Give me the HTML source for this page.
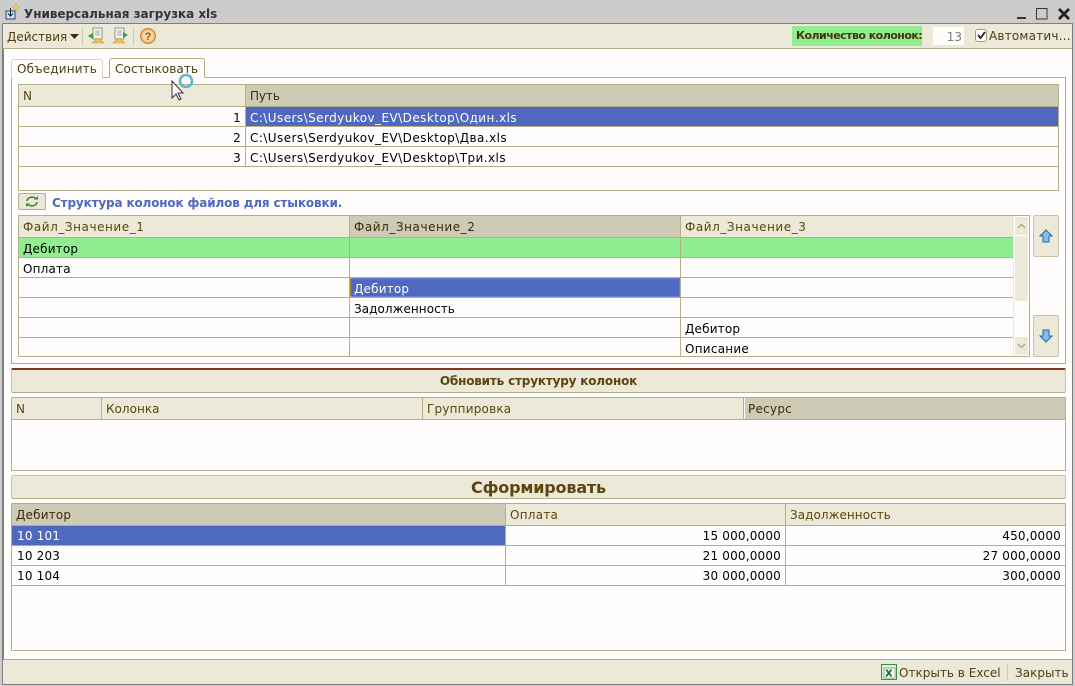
<!DOCTYPE html>
<html><head><meta charset="utf-8">
<style>
html,body{margin:0;padding:0;background:#fff}
body{width:1075px;height:686px;position:relative;overflow:hidden;font-family:"DejaVu Sans",sans-serif;font-size:12px;color:#000}
.r{position:absolute;box-sizing:border-box}
.t{position:absolute;white-space:nowrap;line-height:16px;height:16px;letter-spacing:.18px;font-size:12px}
.h{color:#5c4510}
.hs{color:#3f2a05}
.b{font-weight:bold}
.ra{text-align:right}
.p{letter-spacing:.44px}
.f{letter-spacing:.55px}
.z{letter-spacing:.05px}
</style></head><body>
<!-- window -->
<div class="r" style="left:0;top:0;width:1075px;height:686px;background:#ccc"></div>
<div class="r" style="left:2px;top:23px;width:1071px;height:662px;background:#fffefd;border:1px solid #7f7f7f;border-width:1px 1px 2px 2px"></div>
<svg class="r" style="left:4px;top:4px" width="18" height="18" viewBox="0 0 18 18"><path d="M2 7h9v8H2z" fill="#cfe0ef" stroke="#2a4a6a"/><path d="M6.500 4v8M4 9.500l2.500 2.500 2.500-2.500" stroke="#123" fill="none"/><path d="M12 1l2.500 2.500L12 6 9.500 3.500z" fill="#ffe25c" stroke="#d0a020" stroke-width=".7"/></svg>
<div class="t b" style="left:24px;top:6px;color:#33333f;font-size:12px;letter-spacing:-.04px">Универсальная загрузка xls</div>
<svg class="r" style="left:1014px;top:5px" width="58" height="16" viewBox="0 0 58 16"><rect x="3" y="12" width="9" height="2" fill="#333"/><rect x="22.500" y="3.500" width="10.500" height="10.500" fill="none" stroke="#333"/><path d="M45 4l10 10M55 4L45 14" stroke="#222" stroke-width="2.800"/></svg>
<!-- toolbar -->
<div class="r" style="left:3px;top:24px;width:1069px;height:25px;background:#ece9d8;border-bottom:1px solid #b4ae89"></div>
<div class="t" style="left:7px;top:29px;color:#4f3d14;letter-spacing:0">Действия</div>
<svg class="r" style="left:70px;top:33px" width="9" height="6"><path d="M0 1h9L4.500 6z" fill="#3a2a10"/></svg>
<div class="r" style="left:82px;top:27px;width:1px;height:19px;background:#cfcbb6"></div>
<svg class="r" style="left:87px;top:27px" width="20" height="18" viewBox="0 0 20 18"><path d="M6 1h9v11H6z" fill="#f6f6f0" stroke="#8a9a80"/><path d="M8 4h5M8 6h5M8 8h5" stroke="#9ab"/><path d="M1 9l5-3v6z" fill="#3b9a3b"/><path d="M5 16l6-5 6 5z" fill="#f0c060" stroke="#c8943a" stroke-width=".6"/></svg>
<svg class="r" style="left:112px;top:27px" width="20" height="18" viewBox="0 0 20 18"><path d="M3 1h9v11H3z" fill="#f6f6f0" stroke="#8a9a80"/><path d="M5 4h5M5 6h5M5 8h5" stroke="#9ab"/><path d="M16 8l-5-3v6z" fill="#3b9a3b"/><path d="M1 16l6-5 6 5z" fill="#f0c060" stroke="#c8943a" stroke-width=".6"/></svg>
<div class="r" style="left:133px;top:27px;width:1px;height:19px;background:#cfcbb6"></div>
<svg class="r" style="left:139px;top:27px" width="18" height="18" viewBox="0 0 18 18"><circle cx="9" cy="9" r="7.500" fill="#f3b766" stroke="#b9854a"/><circle cx="9" cy="9" r="5.500" fill="#fbd9a0"/><text x="9" y="13" font-size="11" font-weight="bold" text-anchor="middle" fill="#8a5a1a" font-family="Liberation Sans">?</text></svg>
<div class="r" style="left:792px;top:26px;width:130px;height:20px;background:#90ee90"></div>
<div class="t b" style="left:796px;top:28px;color:#4a3208;font-size:11px;letter-spacing:-.53px">Количество колонок:</div>
<div class="r" style="left:933px;top:27px;width:31px;height:18px;background:#fffefd"></div>
<div class="t ra" style="left:933px;top:29px;width:29px;color:#7d7d7d;letter-spacing:0">13</div>
<div class="r" style="left:975px;top:29px;width:12px;height:13px;background:#fff;border:1px solid #a39c77;border-radius:3px"></div>
<svg class="r" style="left:976px;top:30px" width="11" height="11"><path d="M2 5l2.500 3L9 2" stroke="#222" stroke-width="1.800" fill="none"/></svg>
<div class="t" style="left:989px;top:28px;color:#4f3d14;letter-spacing:.2px">Автоматич...</div>
<!-- tabs -->
<div class="r" style="left:11px;top:77px;width:1055px;height:287px;border:1px solid #b4ae89"></div>
<div class="r" style="left:11px;top:59px;width:92px;height:19px;border:1px solid #d8d4bf;border-bottom:none;border-radius:3px 3px 0 0;background:#fffefd"></div>
<div class="t" style="left:17px;top:61px;color:#4f3d14;letter-spacing:.15px">Объединить</div>
<div class="r" style="left:109px;top:58px;width:96px;height:20px;border:1px solid #b4ae89;border-bottom:1px solid #fffefd;border-radius:3px 3px 0 0;background:#fffefd"></div>
<div class="t" style="left:115px;top:61px;color:#4f3d14;letter-spacing:.12px">Состыковать</div>
<!-- grid 1 -->
<div class="r" style="left:18px;top:84px;width:1041px;height:107px;border:1px solid #b4ae89;background:#fffefd"></div>
<div class="r" style="left:19px;top:85px;width:226px;height:22px;background:#ece9d8"></div>
<div class="r" style="left:246px;top:85px;width:812px;height:22px;background:#cdcab5"></div>
<div class="r" style="left:19px;top:106px;width:1039px;height:1px;background:#b4ae89"></div>
<div class="r" style="left:245px;top:85px;width:1px;height:82px;background:#b4ae89"></div>
<div class="r" style="left:246px;top:107px;width:812px;height:19px;background:#5069c0"></div>
<div class="r" style="left:19px;top:126px;width:1039px;height:1px;background:#b4ae89"></div>
<div class="r" style="left:19px;top:146px;width:1039px;height:1px;background:#b4ae89"></div>
<div class="r" style="left:19px;top:166px;width:1039px;height:1px;background:#b4ae89"></div>
<div class="t h" style="left:23px;top:88px">N</div>
<div class="t hs" style="left:250px;top:88px;letter-spacing:-.1px">Путь</div>
<div class="t ra" style="left:19px;top:110px;width:222px">1</div>
<div class="t ra" style="left:19px;top:130px;width:222px">2</div>
<div class="t ra" style="left:19px;top:150px;width:222px">3</div>
<div class="t p" style="left:250px;top:110px;color:#fff">C:\Users\Serdyukov_EV\Desktop\Один.xls</div>
<div class="t p" style="left:250px;top:130px">C:\Users\Serdyukov_EV\Desktop\Два.xls</div>
<div class="t p" style="left:250px;top:150px">C:\Users\Serdyukov_EV\Desktop\Три.xls</div>
<!-- cursor -->
<svg class="r" style="left:170px;top:72px" width="26" height="30" viewBox="0 0 26 30"><circle cx="16" cy="9" r="6" fill="none" stroke="#5fb8c8" stroke-width="2.600"/><path d="M2 9v17l4-4 3 6 2-1-3-6h5z" fill="#fff" stroke="#333"/></svg>
<!-- refresh + title -->
<div class="r" style="left:18px;top:193px;width:28px;height:17px;background:#ece9d8;border:1px solid #b4ae89;border-radius:2px"></div>
<svg class="r" style="left:25px;top:195px" width="14" height="13" viewBox="0 0 14 13"><path d="M2 6a5 4.500 0 0 1 9-2M12 7a5 4.500 0 0 1-9 2" fill="none" stroke="#2f8a2f" stroke-width="1.500"/><path d="M9 4.500h4V1zM5 8.500H1V12z" fill="#2f8a2f"/></svg>
<div class="t b" style="left:52px;top:195px;color:#4f68c0;letter-spacing:-.15px">Структура колонок файлов для стыковки.</div>
<!-- grid 2 -->
<div class="r" style="left:18px;top:215px;width:1012px;height:142px;border:1px solid #b4ae89;background:#fffefd"></div>
<div class="r" style="left:19px;top:216px;width:331px;height:21px;background:#ece9d8"></div>
<div class="r" style="left:350px;top:216px;width:331px;height:21px;background:#cdcab5"></div>
<div class="r" style="left:681px;top:216px;width:333px;height:21px;background:#ece9d8"></div>
<div class="r" style="left:19px;top:238px;width:994px;height:19px;background:#90ee90"></div>
<div class="r" style="left:19px;top:237px;width:994px;height:1px;background:#b4ae89"></div>
<div class="r" style="left:19px;top:257px;width:994px;height:1px;background:#b4ae89"></div>
<div class="r" style="left:19px;top:277px;width:994px;height:1px;background:#b4ae89"></div>
<div class="r" style="left:19px;top:297px;width:994px;height:1px;background:#b4ae89"></div>
<div class="r" style="left:19px;top:317px;width:994px;height:1px;background:#b4ae89"></div>
<div class="r" style="left:19px;top:337px;width:994px;height:1px;background:#b4ae89"></div>
<div class="r" style="left:349px;top:216px;width:1px;height:140px;background:#b4ae89"></div>
<div class="r" style="left:680px;top:216px;width:1px;height:140px;background:#b4ae89"></div>
<div class="r" style="left:350px;top:278px;width:330px;height:19px;background:#5069c0;outline:1px dotted #b8a040;outline-offset:-1px"></div>
<div class="t h f" style="left:23px;top:219px">Файл_Значение_1</div>
<div class="t hs f" style="left:354px;top:219px">Файл_Значение_2</div>
<div class="t h f" style="left:685px;top:219px">Файл_Значение_3</div>
<div class="t" style="left:23px;top:241px">Дебитор</div>
<div class="t" style="left:23px;top:261px">Оплата</div>
<div class="t" style="left:354px;top:281px;color:#fff">Дебитор</div>
<div class="t z" style="left:354px;top:301px">Задолженность</div>
<div class="t" style="left:685px;top:321px">Дебитор</div>
<div class="t" style="left:685px;top:341px;letter-spacing:.25px">Описание</div>
<!-- scrollbar -->
<div class="r" style="left:1013px;top:216px;width:16px;height:140px;background:#fffefd;border-left:1px solid #ece9d8"></div>
<div class="r" style="left:1015px;top:217px;width:13px;height:18px;background:#ece9d8"></div>
<div class="r" style="left:1015px;top:236px;width:13px;height:65px;background:#ece9d8"></div>
<div class="r" style="left:1015px;top:337px;width:13px;height:18px;background:#ece9d8"></div>
<svg class="r" style="left:1016px;top:222px" width="11" height="8"><path d="M2 6l3.500-3.500L9 6" stroke="#a09a78" stroke-width="1.200" fill="none"/></svg>
<svg class="r" style="left:1016px;top:342px" width="11" height="8"><path d="M2 2l3.500 3.500L9 2" stroke="#a09a78" stroke-width="1.200" fill="none"/></svg>
<!-- arrows -->
<div class="r" style="left:1033px;top:215px;width:26px;height:42px;background:#ece9d8;border:1px solid #c8c4a8;border-radius:2px"></div>
<div class="r" style="left:1033px;top:315px;width:26px;height:42px;background:#ece9d8;border:1px solid #c8c4a8;border-radius:2px"></div>
<svg class="r" style="left:1039px;top:229px" width="14" height="14" viewBox="0 0 14 14"><path d="M7 1l6 6h-3v6H4V7H1z" fill="#7cc0f0" stroke="#2a6a9a"/></svg>
<svg class="r" style="left:1039px;top:329px" width="14" height="14" viewBox="0 0 14 14"><path d="M7 13L1 7h3V1h6v6h3z" fill="#7cc0f0" stroke="#2a6a9a"/></svg>
<!-- update button -->
<div class="r" style="left:11px;top:368px;width:1055px;height:25px;background:#ece9d8;border:1px solid #c8c4a8;border-bottom:1px solid #b4ae89;border-top:2px solid #7b3a1e;border-radius:2px"></div>
<div class="t b" style="left:11px;top:373px;width:1055px;text-align:center;color:#5c4510;letter-spacing:-.18px">Обновить структуру колонок</div>
<!-- grid 3 -->
<div class="r" style="left:11px;top:397px;width:1055px;height:74px;border:1px solid #b4ae89;background:#fffefd"></div>
<div class="r" style="left:12px;top:398px;width:732px;height:21px;background:#ece9d8"></div>
<div class="r" style="left:745px;top:398px;width:320px;height:21px;background:#cdcab5"></div>
<div class="r" style="left:12px;top:419px;width:1053px;height:1px;background:#b4ae89"></div>
<div class="r" style="left:101px;top:398px;width:1px;height:21px;background:#b4ae89"></div>
<div class="r" style="left:422px;top:398px;width:1px;height:21px;background:#b4ae89"></div>
<div class="r" style="left:743px;top:398px;width:1px;height:21px;background:#b4ae89"></div>
<div class="t h" style="left:16px;top:401px">N</div>
<div class="t h" style="left:106px;top:401px;letter-spacing:.03px">Колонка</div>
<div class="t h" style="left:427px;top:401px;letter-spacing:.2px">Группировка</div>
<div class="t hs" style="left:748px;top:401px;letter-spacing:.25px">Ресурс</div>
<!-- form button -->
<div class="r" style="left:11px;top:475px;width:1055px;height:24px;background:#ece9d8;border:1px solid #c8c4a8;border-bottom:1px solid #b4ae89;border-radius:2px"></div>
<div class="t b" style="left:11px;top:480px;width:1055px;text-align:center;color:#5c4510;font-size:16px;letter-spacing:-.18px">Сформировать</div>
<!-- grid 4 -->
<div class="r" style="left:11px;top:503px;width:1055px;height:148px;border:1px solid #b4ae89;background:#fffefd"></div>
<div class="r" style="left:12px;top:504px;width:493px;height:21px;background:#cdcab5"></div>
<div class="r" style="left:506px;top:504px;width:559px;height:21px;background:#ece9d8"></div>
<div class="r" style="left:12px;top:525px;width:1053px;height:1px;background:#b4ae89"></div>
<div class="r" style="left:12px;top:526px;width:493px;height:19px;background:#5069c0"></div>
<div class="r" style="left:12px;top:545px;width:1053px;height:1px;background:#b4ae89"></div>
<div class="r" style="left:12px;top:565px;width:1053px;height:1px;background:#b4ae89"></div>
<div class="r" style="left:12px;top:585px;width:1053px;height:1px;background:#b4ae89"></div>
<div class="r" style="left:505px;top:504px;width:1px;height:81px;background:#b4ae89"></div>
<div class="r" style="left:785px;top:504px;width:1px;height:81px;background:#b4ae89"></div>
<div class="t hs" style="left:16px;top:507px">Дебитор</div>
<div class="t h" style="left:510px;top:507px;letter-spacing:.25px">Оплата</div>
<div class="t h z" style="left:790px;top:507px">Задолженность</div>
<div class="t" style="left:17px;top:528px;color:#fff">10 101</div>
<div class="t" style="left:17px;top:548px">10 203</div>
<div class="t" style="left:17px;top:568px">10 104</div>
<div class="t ra" style="left:510px;top:528px;width:271px">15 000,0000</div>
<div class="t ra" style="left:510px;top:548px;width:271px">21 000,0000</div>
<div class="t ra" style="left:510px;top:568px;width:271px">30 000,0000</div>
<div class="t ra" style="left:790px;top:528px;width:271px">450,0000</div>
<div class="t ra" style="left:790px;top:548px;width:271px">27 000,0000</div>
<div class="t ra" style="left:790px;top:568px;width:271px">300,0000</div>
<!-- status -->
<div class="r" style="left:3px;top:659px;width:1069px;height:25px;background:#ece9d8;border-top:1px solid #b4ae89"></div>
<svg class="r" style="left:881px;top:664px" width="16" height="16" viewBox="0 0 16 16"><rect x=".5" y=".5" width="15" height="15" fill="#dff0dc" stroke="#3e8a4a"/><rect x="3" y="4" width="11" height="10" fill="#fff" stroke="#3e8a4a" stroke-width=".6"/><path d="M5 5.500l5.500 7M10.500 5.500L5 12.500" stroke="#1e6a2a" stroke-width="1.800"/></svg>
<div class="t" style="left:899px;top:665px;color:#4f3d14;letter-spacing:.02px">Открыть в Excel</div>
<div class="r" style="left:1007px;top:663px;width:1px;height:18px;background:#cfcbb6"></div>
<div class="t" style="left:1015px;top:665px;color:#4f3d14;letter-spacing:.02px">Закрыть</div>
</body></html>
